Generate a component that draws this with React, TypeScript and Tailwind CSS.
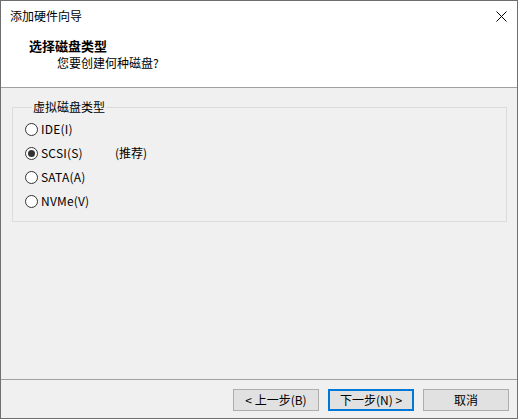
import { useState } from "react";

const FONT = "font-['Microsoft_YaHei_UI','Noto_Sans_CJK_SC',sans-serif]";

const DISK_TYPES = [
  { id: "ide", label: "IDE(I)" },
  { id: "scsi", label: "SCSI(S)", note: "(推荐)" },
  { id: "sata", label: "SATA(A)" },
  { id: "nvme", label: "NVMe(V)" },
];

function Radio({ checked }: { checked: boolean }) {
  return (
    <span className="flex h-[13px] w-[13px] shrink-0 items-center justify-center rounded-full border border-[#333333] bg-white">
      {checked && <span className="h-[7px] w-[7px] rounded-full bg-[#333333]" />}
    </span>
  );
}

function Button({ children, primary }: { children: React.ReactNode; primary?: boolean }) {
  return (
    <button
      className={
        "flex h-[22px] w-[86px] items-center justify-center bg-[#e1e1e1] text-[12px] text-black " +
        (primary ? "border-2 border-[#0078d7]" : "border border-[#adadad]")
      }
    >
      {children}
    </button>
  );
}

export default function App() {
  const [disk, setDisk] = useState("scsi");

  return (
    <div className={`flex h-[419px] w-[518px] flex-col border border-[#6f6f6f] bg-[#f0f0f0] text-[12px] text-black ${FONT}`}>
      {/* title bar */}
      <div className="flex h-[30px] items-center justify-between bg-white pl-[9px] pr-[9px]">
        <span className="leading-none">添加硬件向导</span>
        <svg width="11" height="11" viewBox="0 0 11 11" className="mr-[1px]">
          <path d="M0.5 0.5 L10.5 10.5 M10.5 0.5 L0.5 10.5" stroke="#000" strokeWidth="1" />
        </svg>
      </div>

      {/* header */}
      <div className="flex h-[57px] flex-col border-b border-[#a0a0a0] bg-white pt-[6px]">
        <div className="pl-[28px] text-[13px] leading-[17px] font-bold">选择磁盘类型</div>
        <div className="pl-[56px] leading-[17px]">您要创建何种磁盘?</div>
      </div>

      {/* body */}
      <div className="flex-1 px-[11px] pt-[11px]">
        <fieldset className="h-[123px] w-[495px] border border-[#dcdcdc] pl-[12px] pt-[2px]">
          <legend className="ml-[7px] px-[1px] leading-[16px]">虚拟磁盘类型</legend>
          <div className="flex flex-col">
            {DISK_TYPES.map((d) => (
              <label
                key={d.id}
                className="flex h-[24px] cursor-default items-center"
                onClick={() => setDisk(d.id)}
              >
                <Radio checked={disk === d.id} />
                <span className="ml-[3px] w-[74px] tracking-[0.2px]">{d.label}</span>
                {d.note && <span>{d.note}</span>}
              </label>
            ))}
          </div>
        </fieldset>
      </div>

      {/* footer */}
      <div className="flex h-[39px] items-start justify-end gap-[9px] border-t border-[#a0a0a0] pr-[8px] pt-[9px]">
        <Button>&lt; 上一步(B)</Button>
        <Button primary>下一步(N) &gt;</Button>
        <Button>取消</Button>
      </div>
    </div>
  );
}
